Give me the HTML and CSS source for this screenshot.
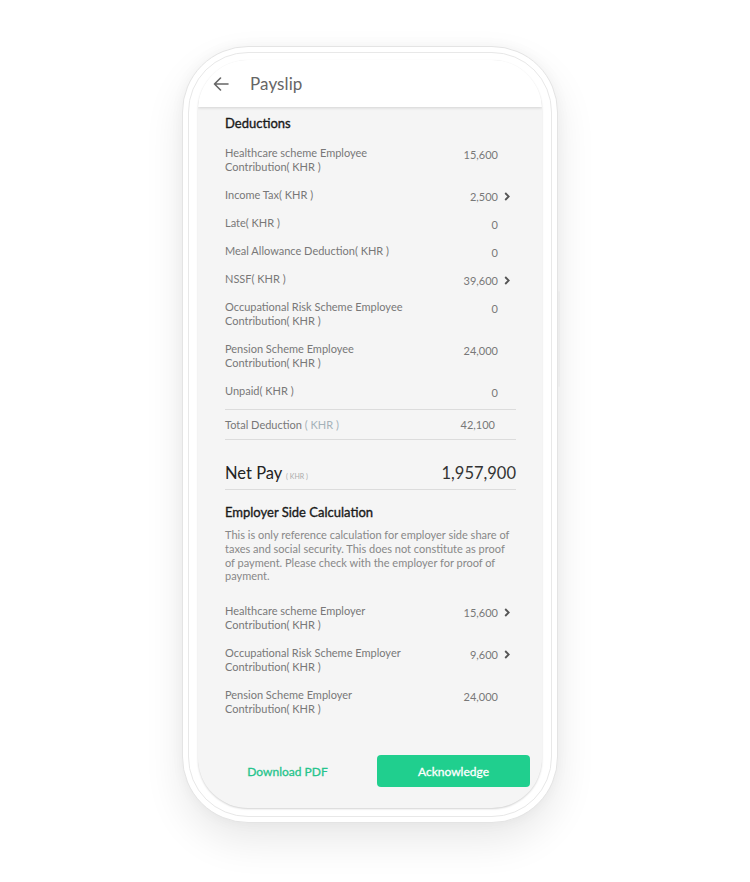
FILE: index.html
```html
<!DOCTYPE html>
<html>
<head>
<meta charset="utf-8">
<link rel="stylesheet" href="styles.css">
</head>
<body>
<div class="stage">
  <div class="phone">
    <span class="side-btn"></span>
    <div class="ring">
      <div class="screen">
        <header class="appbar">
          <svg class="back" width="16" height="14" viewBox="0 0 16 14"><path d="M15 7H1.5M7.5 1L1.5 7l6 6" fill="none" stroke="#666" stroke-width="1.6" stroke-linecap="round" stroke-linejoin="round"/></svg>
          <span class="title">Payslip</span>
        </header>
        <main class="content">
          <h2 class="section">Deductions</h2>
          <div class="row"><span class="label">Healthcare scheme Employee Contribution( KHR )</span><span class="value">15,600</span><span class="chev"></span></div>
          <div class="row"><span class="label">Income Tax( KHR )</span><span class="value">2,500</span><span class="chev"><svg width="6" height="9" viewBox="0 0 6 9"><path d="M1.2 1l3.5 3.5L1.2 8" fill="none" stroke="#555" stroke-width="1.8"/></svg></span></div>
          <div class="row"><span class="label">Late( KHR )</span><span class="value">0</span><span class="chev"></span></div>
          <div class="row"><span class="label">Meal Allowance Deduction( KHR )</span><span class="value">0</span><span class="chev"></span></div>
          <div class="row"><span class="label">NSSF( KHR )</span><span class="value">39,600</span><span class="chev"><svg width="6" height="9" viewBox="0 0 6 9"><path d="M1.2 1l3.5 3.5L1.2 8" fill="none" stroke="#555" stroke-width="1.8"/></svg></span></div>
          <div class="row"><span class="label">Occupational Risk Scheme Employee Contribution( KHR )</span><span class="value">0</span><span class="chev"></span></div>
          <div class="row"><span class="label">Pension Scheme Employee Contribution( KHR )</span><span class="value">24,000</span><span class="chev"></span></div>
          <div class="row"><span class="label">Unpaid( KHR )</span><span class="value">0</span><span class="chev"></span></div>
          <div class="total"><span class="label">Total Deduction <span class="unit">( KHR )</span></span><span class="total-value">42,100</span></div>
          <div class="net"><span class="net-label">Net Pay <span class="net-unit">( KHR )</span></span><span class="net-value">1,957,900</span></div>
          <h2 class="section employer">Employer Side Calculation</h2>
          <p class="note">This is only reference calculation for employer side share of taxes and social security. This does not constitute as proof of payment. Please check with the employer for proof of payment.</p>
          <div class="emp-rows">
            <div class="row"><span class="label">Healthcare scheme Employer Contribution( KHR )</span><span class="value">15,600</span><span class="chev"><svg width="6" height="9" viewBox="0 0 6 9"><path d="M1.2 1l3.5 3.5L1.2 8" fill="none" stroke="#555" stroke-width="1.8"/></svg></span></div>
            <div class="row"><span class="label">Occupational Risk Scheme Employer Contribution( KHR )</span><span class="value">9,600</span><span class="chev"><svg width="6" height="9" viewBox="0 0 6 9"><path d="M1.2 1l3.5 3.5L1.2 8" fill="none" stroke="#555" stroke-width="1.8"/></svg></span></div>
            <div class="row"><span class="label">Pension Scheme Employer Contribution( KHR )</span><span class="value">24,000</span><span class="chev"></span></div>
          </div>
        </main>
        <footer class="actions">
          <span class="download">Download PDF</span>
          <span class="ack">Acknowledge</span>
        </footer>
      </div>
    </div>
  </div>
</div>
</body>
</html>
```

FILE: styles.css
```css
html, body {
  margin: 0;
  padding: 0;
  background: #ffffff;
}
body {
  width: 750px;
  height: 882px;
  overflow: hidden;
  font-family: Lato, "Open Sans", sans-serif;
}
.stage {
  padding: 46px 0 0 182px;
}
.phone {
  position: relative;
  box-sizing: border-box;
  width: 376px;
  height: 777px;
  border: 1px solid #e4e4e4;
  border-radius: 66px;
  background: #fff;
  padding: 5px;
  box-shadow: 0 18px 40px rgba(0, 0, 0, 0.09), 0 0 14px rgba(0, 0, 0, 0.04);
}
.side-btn {
  position: absolute;
  right: -3px;
  top: 244px;
  width: 2px;
  height: 96px;
  background: #ececec;
  border-radius: 1px;
}
.ring {
  box-sizing: border-box;
  height: 100%;
  border: 1px solid #e8e8e8;
  border-radius: 60px;
  padding: 7px 9px 8px;
  background: #fff;
}
.screen {
  height: 100%;
  border-radius: 50px;
  overflow: hidden;
  background: #f5f5f5;
  display: flex;
  flex-direction: column;
  box-shadow: 0 1px 2px rgba(0, 0, 0, 0.18);
}
.appbar {
  flex: 0 0 47px;
  background: #fff;
  display: flex;
  align-items: center;
  padding-left: 15px;
  box-shadow: 0 1px 3px rgba(0, 0, 0, 0.14);
  position: relative;
  z-index: 1;
}
.back {
  display: block;
  margin-right: 21px;
}
.title {
  font-size: 17px;
  color: #666;
  letter-spacing: 0.1px;
}
.content {
  flex: 1;
  overflow: hidden;
  padding: 8px 26px 0 27px;
}
.section {
  margin: 0 0 7px;
  font-size: 13px;
  line-height: 17px;
  font-weight: 400;
  color: #1a1a1a;
  -webkit-text-stroke: 0.35px #1a1a1a;
}
.row {
  display: flex;
  padding: 7px 0;
  font-size: 11px;
  line-height: 14px;
  color: #787878;
}
.row .label {
  flex: 0 0 190px;
}
.row .value {
  flex: 1;
  text-align: right;
  padding-top: 2px;
  margin-bottom: -2px;
}
.chev {
  flex: 0 0 18px;
  display: flex;
  justify-content: flex-end;
  padding-top: 4px;
  padding-right: 6px;
  box-sizing: border-box;
}
.chev svg {
  display: block;
}
.total {
  margin-top: 4px;
  border-top: 1px solid #dcdcdc;
  border-bottom: 1px solid #dcdcdc;
  display: flex;
  justify-content: space-between;
  align-items: center;
  height: 29px;
  font-size: 11px;
  color: #787878;
  padding-right: 21px;
}
.unit {
  color: #a5b2b9;
}
.net {
  display: flex;
  justify-content: space-between;
  align-items: baseline;
  padding: 22px 0 2px;
  line-height: 22px;
  border-bottom: 1px solid #dcdcdc;
}
.net-label {
  font-size: 16.5px;
  color: #222;
}
.net-unit {
  font-size: 7px;
  color: #aaa;
}
.net-value {
  font-size: 16.5px;
  color: #333;
}
.employer {
  margin-top: 14px;
  margin-bottom: 7px;
}
.note {
  margin: 0;
  font-size: 11px;
  line-height: 13.8px;
  color: #888;
}
.emp-rows {
  margin-top: 14px;
}
.actions {
  flex: 0 0 auto;
  display: flex;
  align-items: center;
  padding: 15px 12px 21px 27px;
}
.download {
  width: 125px;
  text-align: center;
  font-size: 12px;
  font-weight: 400;
  color: #26c48c;
  -webkit-text-stroke: 0.3px #26c48c;
  margin-right: 27px;
}
.ack {
  width: 153px;
  height: 32px;
  border-radius: 4px;
  background: #20cf8e;
  color: #fff;
  font-size: 12px;
  font-weight: 400;
  -webkit-text-stroke: 0.3px #fff;
  display: flex;
  align-items: center;
  justify-content: center;
}
```
